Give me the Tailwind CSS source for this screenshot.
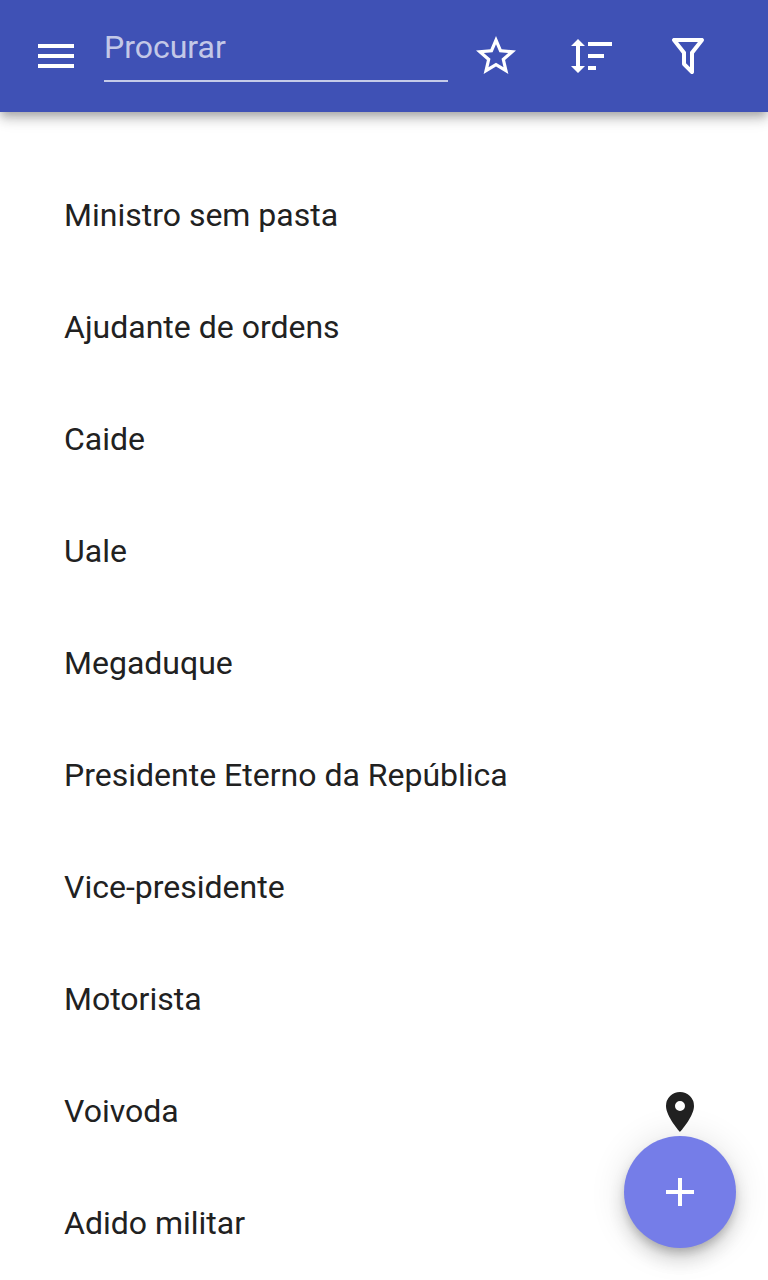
<!DOCTYPE html>
<html lang="pt">
<head>
<meta charset="utf-8">
<title>Procurar</title>
<script src="https://cdn.jsdelivr.net/npm/@tailwindcss/browser@4"></script>
</head>
<body class="h-[1280px] w-[768px] overflow-hidden bg-white font-[Roboto,sans-serif] text-[32px] leading-[48px] text-[#212121] antialiased">
<header class="relative flex h-28 items-center bg-[#3f51b5] pl-8 text-white shadow-[0_4px_8px_-2px_rgba(0,0,0,0.2),0_8px_10px_0_rgba(0,0,0,0.14),0_2px_20px_0_rgba(0,0,0,0.12)]">
  <button class="size-12" aria-label="Menu"><svg class="size-12" viewBox="0 0 24 24" fill="currentColor"><path d="M3 18h18v-2H3v2zm0-5h18v-2H3v2zm0-7v2h18V6H3z"/></svg></button>
  <div class="mb-1.5 ml-6 flex h-[58px] w-[344px] items-start border-b-2 border-white/70 leading-[46px] text-white/70"><span>Procurar</span></div>
  <button class="ml-6 size-12" aria-label="Favoritos"><svg class="size-12" viewBox="0 0 24 24" fill="currentColor"><path d="M12,15.39L8.24,17.66L9.23,13.38L5.91,10.5L10.29,10.13L12,6.09L13.71,10.13L18.09,10.5L14.77,13.38L15.76,17.66M22,9.24L14.81,8.63L12,2L9.19,8.63L2,9.24L7.45,13.97L5.82,21L12,17.27L18.18,21L16.54,13.97L22,9.24Z"/></svg></button>
  <button class="ml-12 size-12" aria-label="Ordenar"><svg class="size-12" viewBox="0 0 24 24" fill="currentColor"><path d="M10,13V11H18V13H10M10,19V17H14V19H10M10,7V5H22V7H10M6,17H8.5L5,20.5L1.5,17H4V7H1.5L5,3.5L8.5,7H6V17Z"/></svg></button>
  <button class="ml-12 size-12" aria-label="Filtrar"><svg class="size-12" viewBox="0 0 24 24" fill="currentColor"><path d="M15,19.88C15.04,20.18 14.94,20.5 14.71,20.71C14.32,21.1 13.69,21.1 13.3,20.71L9.29,16.7C9.06,16.47 8.96,16.16 9,15.87V10.75L4.21,4.62C3.87,4.19 3.95,3.56 4.38,3.22C4.57,3.08 4.78,3 5,3H19C19.22,3 19.43,3.08 19.62,3.22C20.05,3.56 20.13,4.19 19.79,4.62L15,10.75V19.88M7.04,5L11,10.06V15.58L13,17.58V10.05L16.96,5H7.04Z"/></svg></button>
</header>
<ul class="pt-[47px]">
  <li class="flex h-28 items-center px-16">Ministro sem pasta</li>
  <li class="flex h-28 items-center px-16">Ajudante de ordens</li>
  <li class="flex h-28 items-center px-16">Caide</li>
  <li class="flex h-28 items-center px-16">Uale</li>
  <li class="flex h-28 items-center px-16">Megaduque</li>
  <li class="flex h-28 items-center px-16">Presidente Eterno da República</li>
  <li class="flex h-28 items-center px-16">Vice-presidente</li>
  <li class="flex h-28 items-center px-16">Motorista</li>
  <li class="flex h-28 items-center px-16">Voivoda</li>
  <li class="flex h-28 items-center px-16">Adido militar</li>
</ul>
<div class="fixed right-8 bottom-8 flex flex-col items-center">
  <svg class="relative z-10 size-12" viewBox="0 0 24 24" fill="#212121"><path d="M12,11.5A2.5,2.5 0 0,1 9.5,9A2.5,2.5 0 0,1 12,6.5A2.5,2.5 0 0,1 14.5,9A2.5,2.5 0 0,1 12,11.5M12,2A7,7 0 0,0 5,9C5,14.25 12,22 12,22C12,22 19,14.25 19,9A7,7 0 0,0 12,2Z"/></svg>
  <button class="flex size-28 items-center justify-center rounded-full bg-[#757de8] text-white shadow-[0_6px_10px_-2px_rgba(0,0,0,0.2),0_12px_20px_0_rgba(0,0,0,0.14),0_2px_36px_0_rgba(0,0,0,0.12)]" aria-label="Adicionar"><svg class="size-12" viewBox="0 0 24 24" fill="currentColor"><path d="M19 13h-6v6h-2v-6H5v-2h6V5h2v6h6v2z"/></svg></button>
</div>
</body>
</html>
